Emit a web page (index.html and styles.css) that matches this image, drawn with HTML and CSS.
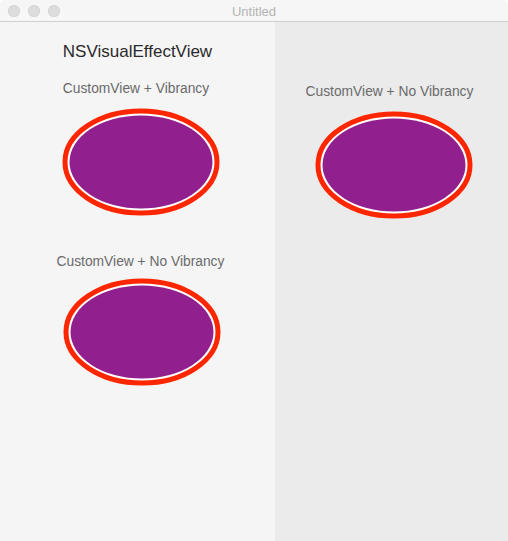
FILE: index.html
```html
<!DOCTYPE html>
<html>
<head>
<meta charset="utf-8">
<link rel="stylesheet" href="styles.css">
</head>
<body>
<div class="window">
  <div class="titlebar">
    <div class="lights">
      <span class="light"></span><span class="light"></span><span class="light"></span>
    </div>
    <div class="title">Untitled</div>
  </div>
  <div class="content">
    <div class="pane left">
      <div class="heading">NSVisualEffectView</div>
      <div class="label l1">CustomView + Vibrancy</div>
      <svg class="oval o1" width="158" height="108" viewBox="0 0 158 108">
        <ellipse cx="79" cy="54" rx="76" ry="51" fill="#fff" stroke="#fc2700" stroke-width="5"/>
        <ellipse cx="79" cy="54" rx="71.5" ry="46.5" fill="#91208e"/>
      </svg>
      <div class="label l2">CustomView + No Vibrancy</div>
      <svg class="oval o2" width="158" height="108" viewBox="0 0 158 108">
        <ellipse cx="79" cy="54" rx="76" ry="51" fill="#fff" stroke="#fc2700" stroke-width="5"/>
        <ellipse cx="79" cy="54" rx="71.5" ry="46.5" fill="#91208e"/>
      </svg>
    </div>
    <div class="pane right">
      <div class="label r1">CustomView + No Vibrancy</div>
      <svg class="oval o3" width="158" height="108" viewBox="0 0 158 108">
        <ellipse cx="79" cy="54" rx="76" ry="51" fill="#fff" stroke="#fc2700" stroke-width="5"/>
        <ellipse cx="79" cy="54" rx="71.5" ry="46.5" fill="#91208e"/>
      </svg>
    </div>
  </div>
</div>
</body>
</html>
```

FILE: styles.css
```css
html, body {
  margin: 0;
  padding: 0;
  background: #ffffff;
}
body {
  font-family: "Liberation Sans", Arial, sans-serif;
}
.window {
  width: 508px;
  height: 541px;
  display: flex;
  flex-direction: column;
  border-radius: 5px 5px 0 0;
  overflow: hidden;
  background: #f5f5f5;
}
.titlebar {
  height: 21px;
  flex: none;
  background: #f6f6f6;
  border-bottom: 1px solid #cfcfcf;
  display: flex;
  align-items: center;
  justify-content: center;
  position: relative;
}
.lights {
  position: absolute;
  left: 8px;
  top: 5px;
  display: flex;
  gap: 8px;
}
.light {
  width: 12px;
  height: 12px;
  border-radius: 50%;
  background: #dcdcdc;
  box-shadow: inset 0 0 0 0.5px #cfcfcf;
}
.title {
  font-size: 13px;
  color: #b3b3b3;
  margin-top: 1px;
}
.content {
  flex: 1;
  display: flex;
}
.pane {
  display: flex;
  flex-direction: column;
  align-items: center;
}
.left {
  width: 275px;
  background: #f5f5f5;
}
.right {
  flex: 1;
  background: #ebebeb;
}
.heading {
  font-size: 17px;
  color: #2a2a2a;
  margin-top: 20px;
  line-height: 20px;
}
.label {
  font-size: 13.8px;
  color: #6a6a6a;
  line-height: 16px;
}
.l1 {
  margin-top: 19px;
  margin-left: -3px;
}
.oval {
  display: block;
}
.o1 {
  margin-top: 11px;
  margin-left: 7px;
}
.l2 {
  margin-top: 38px;
  margin-left: 6px;
}
.o2 {
  margin-top: 8px;
  margin-left: 9px;
}
.r1 {
  margin-top: 62px;
  margin-left: -4px;
}
.o3 {
  margin-top: 11px;
  margin-left: 5px;
}
```
